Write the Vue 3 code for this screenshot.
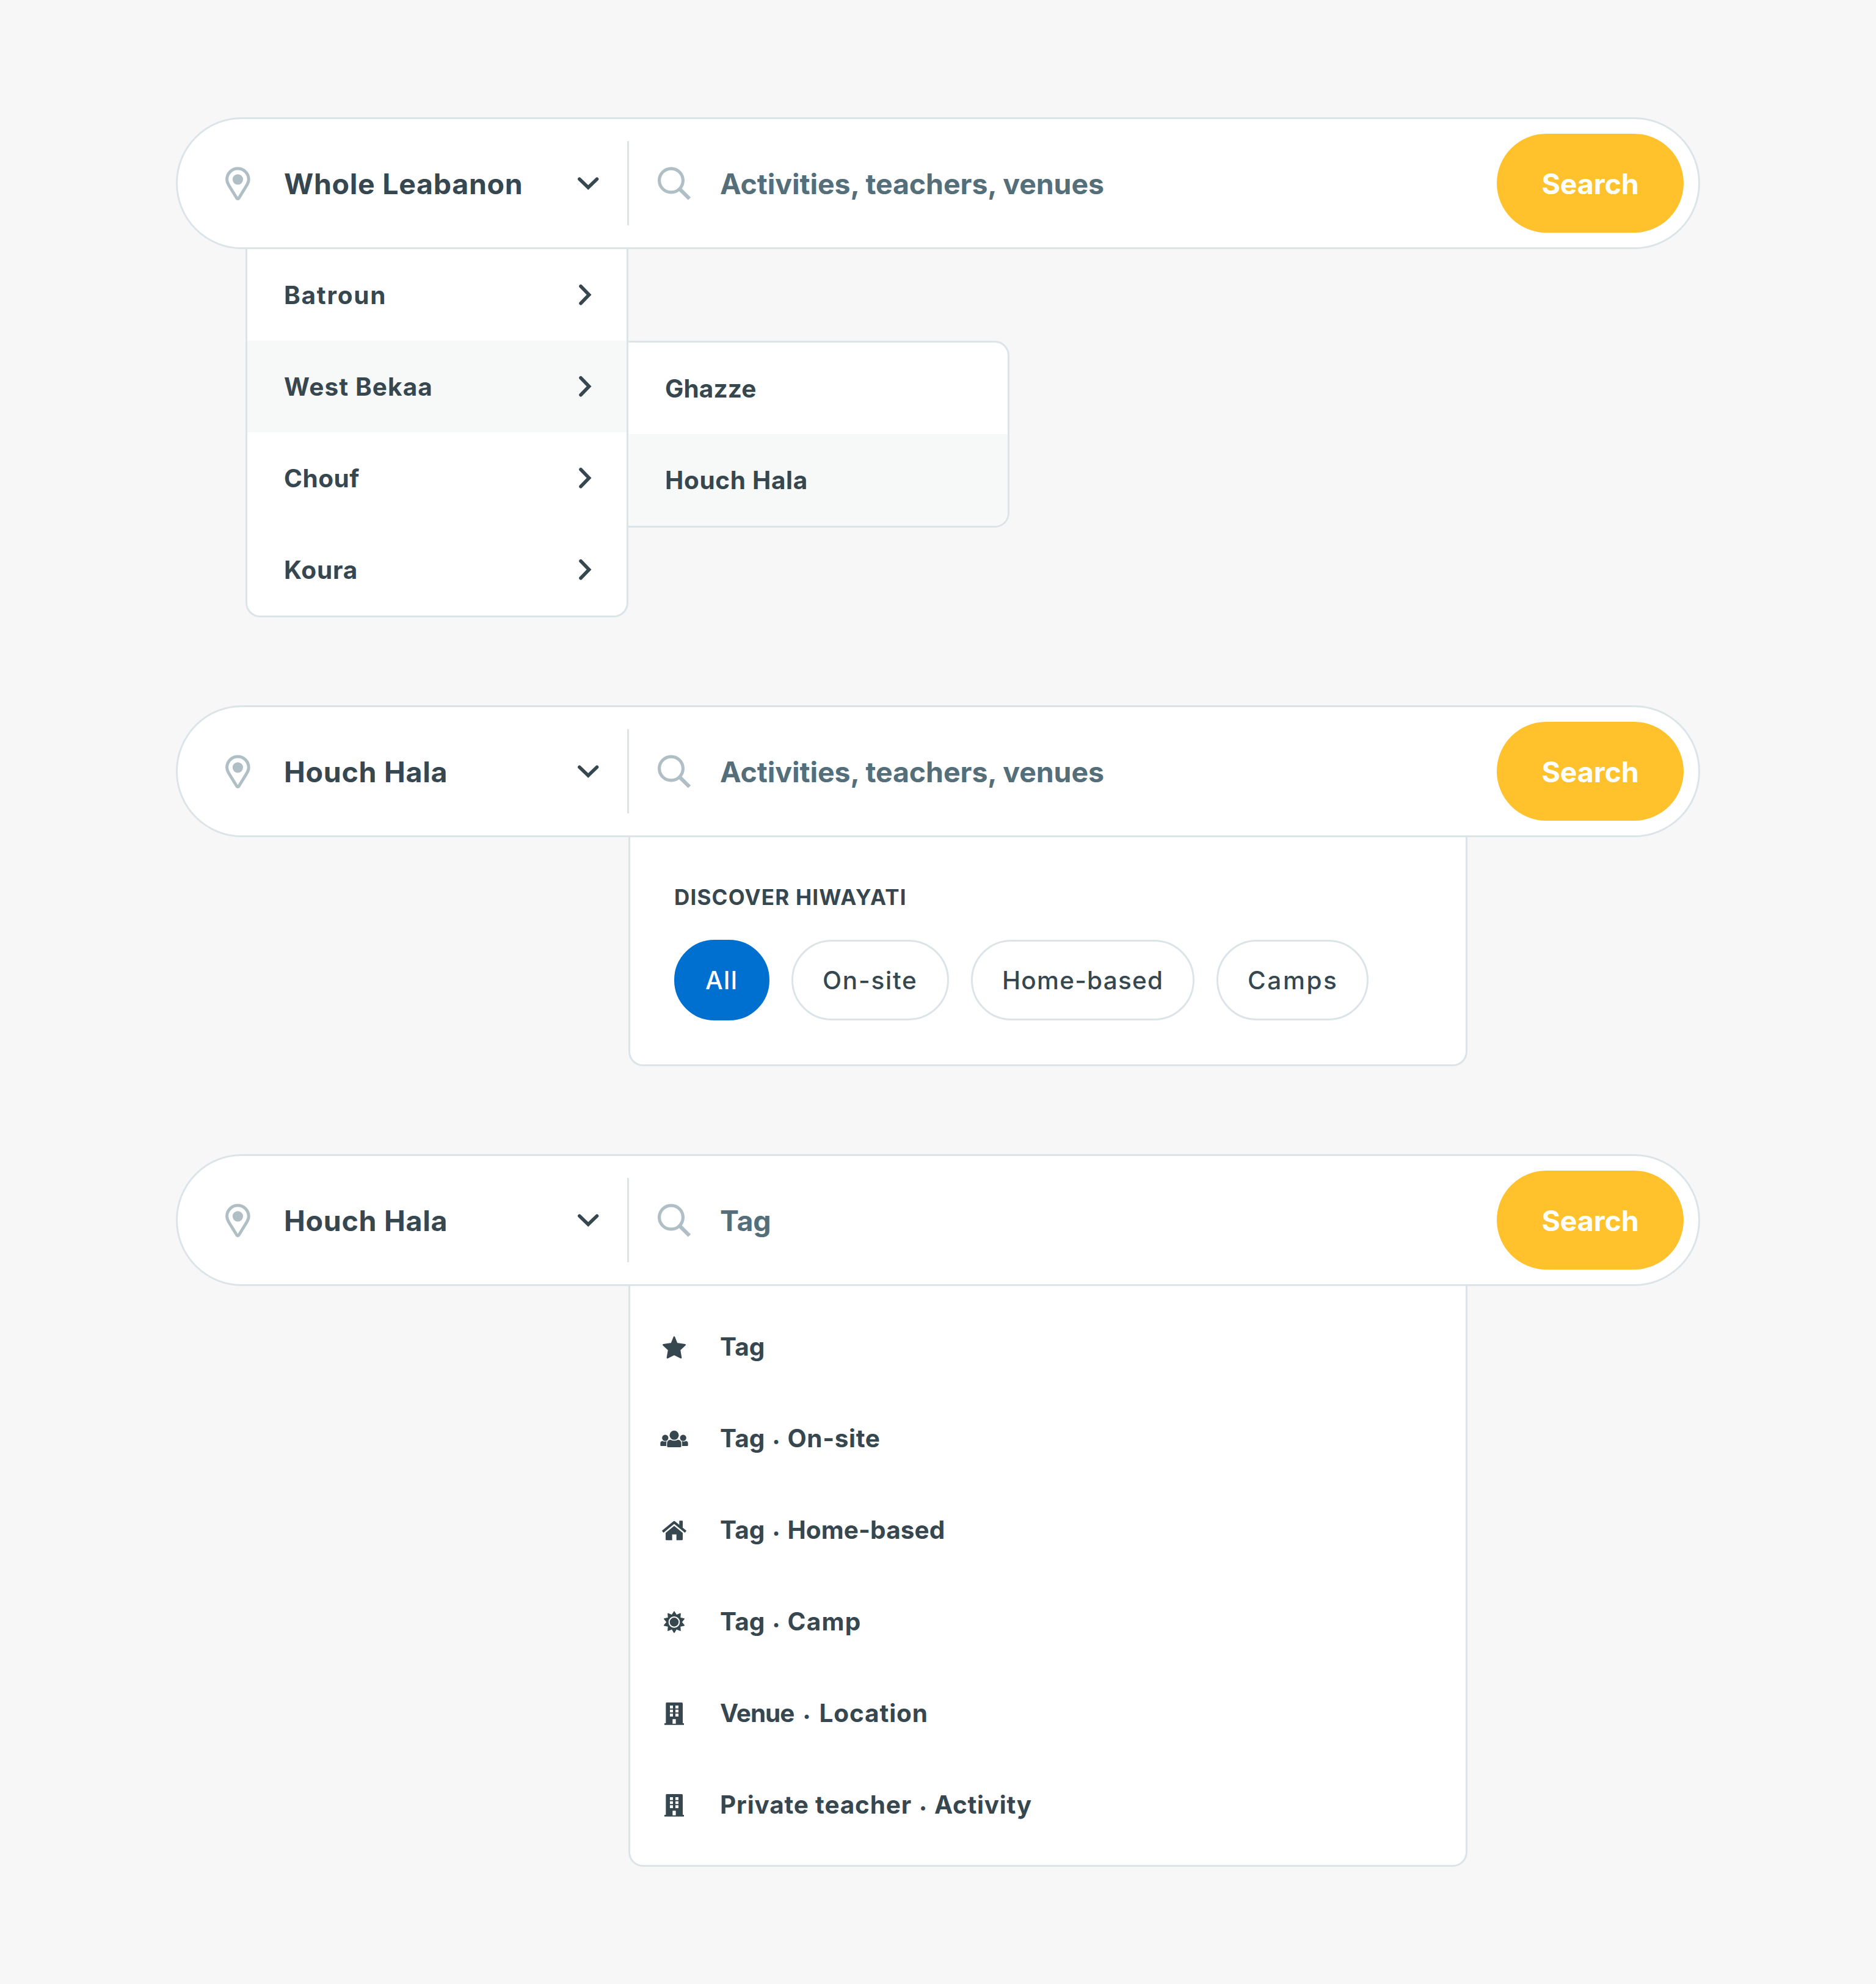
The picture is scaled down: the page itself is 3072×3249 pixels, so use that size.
<script setup>
// `track` is the letter-spacing of a label in pixels
const label = (text, track) => ({ text, track })

const regions = [
  label('Batroun', 1.76),
  label('West Bekaa', 1.13),
  label('Chouf', 0.5),
  label('Koura', 0.8)
]
const towns = [label('Ghazze', 0.12), label('Houch Hala', 0.67)]
const filters = [
  { text: 'All', track: 1.4, width: 156 },
  { text: 'On-site', track: 1.75, width: 258 },
  { text: 'Home-based', track: 1.2, width: 366 },
  { text: 'Camps', track: 2.6, width: 249 }
]
const bars = [
  { location: label('Whole Leabanon', 0.7), query: label('Activities, teachers, venues', -0.1), panel: 'regions' },
  { location: label('Houch Hala', 0.75), query: label('Activities, teachers, venues', -0.1), panel: 'discover' },
  { location: label('Houch Hala', 0.75), query: label('Tag', -0.15), panel: 'suggestions' }
]
const suggestions = [
  { icon: 'star', kind: label('Tag', 0.1) },
  { icon: 'group', kind: label('Tag', 0.1), gap: 37, detail: label('On-site', 0.63) },
  { icon: 'home', kind: label('Tag', 0.1), gap: 37, detail: label('Home-based', 0.1) },
  { icon: 'sun', kind: label('Tag', 0.1), gap: 37, detail: label('Camp', 1.3) },
  { icon: 'building', kind: label('Venue', -1), gap: 41, detail: label('Location', 0.88) },
  { icon: 'building', kind: label('Private teacher', 0.82), gap: 37, detail: label('Activity', 0.7) }
]

const spacing = (item) => ({ letterSpacing: `${item.track}px` })

// Ten-pointed sunburst around the disc
const rays = Array.from({ length: 20 }, (_, i) => {
  const r = i % 2 ? 35 : 51
  const a = (i * Math.PI) / 10
  return `${(75 + r * Math.sin(a)).toFixed(2)},${(79 - r * Math.cos(a)).toFixed(2)}`
}).join(' ')
</script>

<template>
  <main class="page">
    <section v-for="bar in bars" :key="bar.panel" class="search">
      <div class="bar">
        <div class="location">
          <svg class="pin" width="48" height="60" viewBox="0 0 48 60">
            <path d="M6.6 23.8a17.8 17.8 0 0 1 35.6 0C42.2 28 40.4 31.4 38 35.2L26.4 54Q24.4 57 22.4 54L10.8 35.2C8.4 31.4 6.6 28 6.6 23.8Z" fill="none" stroke="currentColor" stroke-width="5" />
            <circle cx="24.4" cy="23.8" r="8.6" fill="currentColor" />
          </svg>
          <span class="value" :style="spacing(bar.location)">{{ bar.location.text }}</span>
          <svg class="chevron-down" width="40" height="26" viewBox="0 0 40 26">
            <path d="M4.9 6.2L19.2 20L33.5 6.2" fill="none" stroke="currentColor" stroke-width="5.6" stroke-linecap="round" />
          </svg>
        </div>
        <div class="query">
          <svg class="lens" width="60" height="60" viewBox="0 0 60 60">
            <circle cx="25" cy="25.5" r="19.4" fill="none" stroke="currentColor" stroke-width="5.2" />
            <path d="M39.4 40L55 55.4" stroke="currentColor" stroke-width="6.2" />
          </svg>
          <span class="value" :style="spacing(bar.query)">{{ bar.query.text }}</span>
        </div>
        <button class="submit">Search</button>
      </div>

      <div v-if="bar.panel === 'regions'" class="menus">
        <ul class="menu">
          <li v-for="item in regions" :key="item.text" class="option" :class="{ active: item.text === 'West Bekaa' }">
            <span class="text" :style="spacing(item)">{{ item.text }}</span>
            <svg width="24" height="40" viewBox="0 0 24 40">
              <path d="M5 5.8L18.6 19.8L5 33.8" fill="none" stroke="currentColor" stroke-width="5.6" stroke-linecap="round" />
            </svg>
          </li>
        </ul>
        <ul class="submenu">
          <li v-for="item in towns" :key="item.text" class="option" :class="{ active: item.text === 'Houch Hala' }">
            <span class="text" :style="spacing(item)">{{ item.text }}</span>
          </li>
        </ul>
      </div>

      <div v-else-if="bar.panel === 'discover'" class="panel discover">
        <h2 class="heading">DISCOVER HIWAYATI</h2>
        <div class="chips">
          <button
            v-for="item in filters"
            :key="item.text"
            class="chip"
            :class="{ selected: item.text === 'All' }"
            :style="{ width: `${item.width}px`, letterSpacing: `${item.track}px` }"
          >{{ item.text }}</button>
        </div>
      </div>

      <ul v-else class="panel suggestions">
        <li v-for="(item, i) in suggestions" :key="i" class="suggestion">
          <svg class="glyph" width="50" height="50" viewBox="0 0 150 150" fill="currentColor">
            <path v-if="item.icon === 'star'" d="M75 29L87.500 61L128 67L101.500 91.500L108 130L75 113.500L42 130L48.500 91.500L22 67L62.500 61Z" stroke="currentColor" stroke-width="8" stroke-linejoin="round" />
            <g v-else-if="item.icon === 'group'">
              <circle cx="75" cy="61" r="22.500" />
              <circle cx="31" cy="74" r="15.500" />
              <circle cx="119" cy="74" r="15.500" />
              <path d="M40 115V103Q40 84 57 83Q75 93 93 83Q110 84 110 103V115Q110 120 105 120H45Q40 120 40 115Z" />
              <path d="M7 110V101Q7 91 17 89.500Q28 95 38 90Q36 95 36 102V114H11Q7 114 7 110Z" />
              <path d="M143 110V101Q143 91 133 89.500Q122 95 112 90Q114 95 114 102V114H139Q143 114 143 110Z" />
            </g>
            <g v-else-if="item.icon === 'home'">
              <path d="M100 33Q100 31 102 31H115Q117 31 117 33V66L100 53Z" />
              <path d="M18.500 85L75 38.500L131.500 85" fill="none" stroke="currentColor" stroke-width="12" stroke-linejoin="round" />
              <path d="M75 56L117 91V122Q117 127 112 127H86V98H65V127H38Q33 127 33 122V91Z" />
            </g>
            <g v-else-if="item.icon === 'sun'">
              <polygon :points="rays" stroke="currentColor" stroke-width="5" stroke-linejoin="round" />
              <circle cx="75" cy="79" r="25" fill="none" stroke="#fff" stroke-width="6" />
            </g>
            <path v-else fill-rule="evenodd" d="M38 24H112Q117 24 117 29V126H123V134H27V126H34V29Q34 24 38 24ZM54 39V53H69V39ZM81 39V53H96V39ZM54 59V73H69V59ZM81 59V73H96V59ZM54 79V93H69V79ZM81 79V93H96V79ZM67 106V128H83V106Z" />
          </svg>
          <span class="text" :style="spacing(item.kind)">{{ item.kind.text }}</span>
          <template v-if="item.detail">
            <span class="dot" :style="{ width: `${item.gap}px` }">·</span>
            <span class="text" :style="spacing(item.detail)">{{ item.detail.text }}</span>
          </template>
        </li>
      </ul>
    </section>
  </main>
</template>

<style>
body {
  background: #f7f7f7;
}
</style>

<style scoped>
.page {
  box-sizing: border-box;
  width: 3072px;
  min-height: 3249px;
  padding: 192px 288px;
  display: flex;
  flex-direction: column;
  gap: 144px;
  background: #f7f7f7;
  color: #37474f;
  font-family: Inter, "Noto Sans", sans-serif;
  font-weight: 700;
  line-height: 1.2;
  white-space: nowrap;
}
svg {
  display: block;
  flex: none;
}
ul {
  list-style: none;
  margin: 0;
  padding: 0;
}
button {
  font: inherit;
  color: inherit;
  padding: 0;
  border: 0;
}
.bar {
  box-sizing: border-box;
  height: 216px;
  border: 3px solid #dce4e8;
  border-radius: 108px;
  background: #fff;
  display: flex;
  align-items: center;
  font-size: 46.5px;
}
.location {
  box-sizing: border-box;
  width: 739px;
  height: 138px;
  padding-left: 74px;
  border-right: 3px solid #dce4e8;
  display: flex;
  align-items: center;
}
.value {
  padding-top: 4px;
}
.text {
  padding-top: 2px;
}
.pin {
  margin-right: 52px;
  color: #b0bec5;
}
.chevron-down {
  margin-left: auto;
  margin-right: 43px;
}
.query {
  flex: 1;
  padding-left: 44px;
  display: flex;
  align-items: center;
  color: #546e7a;
}
.lens {
  margin-right: 45px;
  color: #b0bec5;
}
.submit {
  width: 306px;
  height: 162px;
  margin-right: 24px;
  padding-top: 4px;
  border-radius: 81px;
  background: #ffc22d;
  color: #fff;
  letter-spacing: -0.1px;
}
.menus {
  display: flex;
  align-items: flex-start;
  padding-left: 114px;
  font-size: 40.5px;
}
.menu {
  box-sizing: border-box;
  width: 627px;
  border: 3px solid #dce4e8;
  border-top: 0;
  border-radius: 0 0 24px 24px;
  background: #fff;
  overflow: hidden;
}
.submenu {
  box-sizing: border-box;
  width: 624px;
  margin-top: 150px;
  border: 3px solid #dce4e8;
  border-left: 0;
  border-radius: 0 24px 24px 0;
  background: #fff;
  overflow: hidden;
}
.option {
  box-sizing: border-box;
  height: 150px;
  padding: 0 56px 0 60px;
  display: flex;
  align-items: center;
  justify-content: space-between;
}
.active {
  background: #f7f9f9;
}
.panel {
  box-sizing: border-box;
  width: 1374px;
  margin-left: 741px;
  border: 3px solid #dce4e8;
  border-top: 0;
  border-radius: 0 0 24px 24px;
  background: #fff;
  font-size: 40.5px;
}
.discover {
  height: 375px;
  padding: 72px 72px 0;
}
.heading {
  margin: 0;
  height: 52px;
  line-height: 52px;
  font-size: 35px;
  font-weight: 700;
  letter-spacing: 1.2px;
}
.chips {
  margin-top: 44px;
  display: flex;
  gap: 36px;
}
.chip {
  box-sizing: border-box;
  height: 132px;
  padding: 2px 0 0 48px;
  border: 3px solid #dce4e8;
  border-radius: 66px;
  background: #fff;
  font-weight: 500;
  text-align: left;
}
.selected {
  border-color: #0070d0;
  background: #0070d0;
  color: #fff;
}
.suggestions {
  padding: 24px 0;
}
.suggestion {
  height: 150px;
  padding-left: 47px;
  display: flex;
  align-items: center;
}
.glyph {
  margin-right: 50px;
}
.dot {
  margin-top: 12px;
  text-align: center;
}
</style>
